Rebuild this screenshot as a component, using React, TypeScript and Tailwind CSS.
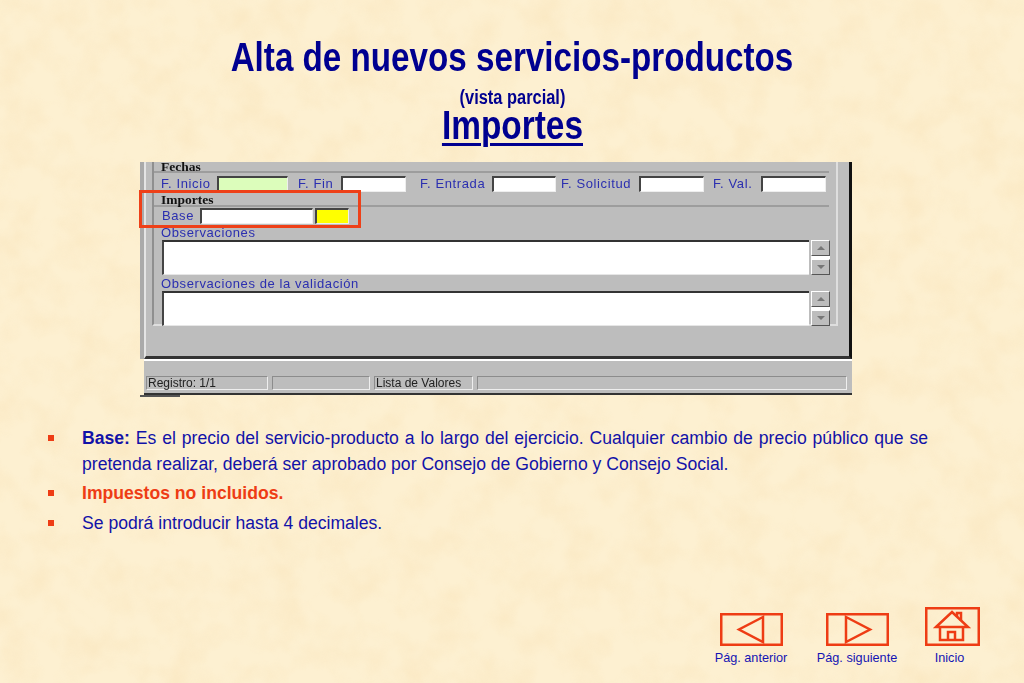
function Field({ w, green, yellow }: { w: string; green?: boolean; yellow?: boolean }) {
  const bg = green ? "bg-[#dcfdbb]" : yellow ? "bg-[#ffff00]" : "bg-white";
  return <div className={`${w} h-[16px] shrink-0 ${bg} border-t-2 border-l-2 border-t-[#444] border-l-[#444] border-r border-b border-r-[#eee] border-b-[#eee]`} />;
}

function Label({ children, w }: { children: string; w: string }) {
  return <span className={`${w} shrink-0 text-[13px] leading-[16px] tracking-[0.6px] text-[#2b2fb0] whitespace-nowrap font-['Liberation_Sans',sans-serif]`}>{children}</span>;
}

function Section({ children, h, mt }: { children: string; h: string; mt: string }) {
  return (
    <div className={`${mt} ${h} border-b-2 border-b-[#9d9d9d] pl-[7px] text-[13.5px] leading-[9px] font-bold text-[#111] font-['Liberation_Serif',serif] w-[675px]`}>
      {children}
    </div>
  );
}

function Scroll() {
  const btn = "h-[16px] w-[19px] bg-[#bdbdbd] border border-t-white border-l-white border-r-[#555] border-b-[#555] flex items-center justify-center";
  return (
    <div className="ml-[2px] w-[19px] h-[35px] flex flex-col justify-between bg-white">
      <div className={btn}><div className="w-0 h-0 border-x-[4px] border-x-transparent border-b-[4px] border-b-[#777]" /></div>
      <div className={btn}><div className="w-0 h-0 border-x-[4px] border-x-transparent border-t-[4px] border-t-[#777]" /></div>
    </div>
  );
}

function Area() {
  return (
    <div className="flex pl-[8px]">
      <div className="w-[647px] h-[35px] bg-white border-t-2 border-l-2 border-t-[#333] border-l-[#444] border-b border-b-[#e6e6e6]" />
      <Scroll />
    </div>
  );
}

function Status({ w, children }: { w: string; children?: string }) {
  return (
    <div className={`${w} h-[14px] border border-t-[#8c8c8c] border-l-[#8c8c8c] border-r-[#eee] border-b-[#eee] pl-[1px] text-[12px] leading-[13px] text-[#222] font-['Liberation_Sans',sans-serif] whitespace-nowrap`}>
      {children}
    </div>
  );
}

function NavItem({ w, label, labelClass, children }: { w: string; label: string; labelClass?: string; children: React.ReactNode }) {
  return (
    <div className={`${w} flex flex-col items-center`}>
      {children}
      <span className={`mt-[6px] text-[12.7px] leading-[13px] text-[#1414b4] whitespace-nowrap font-['Liberation_Sans',sans-serif] ${labelClass ?? ""}`}>{label}</span>
    </div>
  );
}

function Bullet({ children, mt }: { children: React.ReactNode; mt: string }) {
  return (
    <li className={`${mt} flex`}>
      <span className="mt-[10px] ml-[48px] mr-[28px] w-[6px] h-[6px] shrink-0 bg-[#ee3c14]" />
      <div className="w-[846px] text-justify">{children}</div>
    </li>
  );
}

export default function App() {
  return (
    <div className="relative w-[1024px] h-[683px] overflow-hidden bg-[#fdf0d1] font-['Liberation_Sans',sans-serif]">
      <svg className="absolute inset-0" width="1024" height="683" aria-hidden="true">
        <filter id="paper">
          <feTurbulence type="fractalNoise" baseFrequency="0.03" numOctaves="3" seed="7" />
          <feColorMatrix type="matrix" values="0 0 0 0 0.95  0 0 0 0 0.78  0 0 0 0 0.5  1.8 0 0 0 -0.68" />
        </filter>
        <rect width="1024" height="683" filter="url(#paper)" opacity="0.6" />
      </svg>

      <div className="relative flex flex-col h-full">
        <header className="flex flex-col items-center font-bold text-[#000090]">
          <h1 className="mt-[34px] text-[40px] leading-[46px] whitespace-nowrap scale-x-[0.83]">Alta de nuevos servicios-productos</h1>
          <p className="mt-[7px] text-[20px] leading-[20px] whitespace-nowrap scale-x-[0.82]">(vista parcial)</p>
          <h2 className="text-[40px] leading-[36px] underline decoration-[3px] underline-offset-[4px] scale-x-[0.835]">Importes</h2>
        </header>

        <div className="relative mt-[19px] ml-[140px] w-[713px] h-[236px] blur-[0.35px]">
          <div className="flex h-[197px]">
            <div className="w-[4px] bg-[#aaaaaa]" />
            <div className="w-[708px] bg-[#bdbdbd] border-l-2 border-l-[#e4e4e4] border-b-[3px] border-b-[#333] border-r-[3px] border-r-[#111]">
              <div className="ml-[6px] w-[686px] h-[164px] border-x-2 border-b-2 border-x-[#dedede] border-b-[#dedede] border-l-[#8f8f8f]">
                <Section mt="mt-0" h="h-[11px]">Fechas</Section>
                <div className="mt-[3px] flex items-center pl-[7px]">
                  <Label w="w-[56px]">F. Inicio</Label>
                  <Field w="w-[71px]" green />
                  <span className="w-[10px]" />
                  <Label w="w-[43px]">F. Fin</Label>
                  <Field w="w-[65px]" />
                  <span className="w-[14px]" />
                  <Label w="w-[72px]">F. Entrada</Label>
                  <Field w="w-[64px]" />
                  <span className="w-[5px]" />
                  <Label w="w-[78px]">F. Solicitud</Label>
                  <Field w="w-[65px]" />
                  <span className="w-[9px]" />
                  <Label w="w-[48px]">F. Val.</Label>
                  <Field w="w-[65px]" />
                </div>
                <Section mt="mt-[3px]" h="h-[12px]">Importes</Section>
                <div className="mt-[1px] flex items-center pl-[8px]">
                  <Label w="w-[38px]">Base</Label>
                  <Field w="w-[113px]" />
                  <span className="w-[2px]" />
                  <Field w="w-[34px]" yellow />
                </div>
                <div className="mt-[1px] pl-[7px] h-[15px] flex items-center"><Label w="w-[200px]">Observaciones</Label></div>
                <Area />
                <div className="mt-[1px] pl-[7px] h-[15px] flex items-center"><Label w="w-[300px]">Observaciones de la validación</Label></div>
                <Area />
              </div>
            </div>
          </div>
          <div className="ml-[4px] w-[708px] h-[36px] bg-[#bdbdbd] border-t-2 border-t-white border-b-2 border-b-[#333] flex items-end gap-[4px] pl-[2px] pb-[3px]">
            <Status w="w-[122px]">Registro: 1/1</Status>
            <Status w="w-[98px]" />
            <Status w="w-[99px]">Lista de Valores</Status>
            <Status w="w-[370px]" />
          </div>
          <div className="w-[40px] h-[2px] bg-[#555]" />
          <div className="absolute -left-px top-[28px] w-[222px] h-[38px] border-[3px] border-[#ee4018]" />
        </div>

        <ul className="mt-[27px] text-[17.6px] leading-[26px] text-[#1212a8]">
          <Bullet mt="mt-0"><b>Base:</b> Es el precio del servicio-producto a lo largo del ejercicio. Cualquier cambio de precio público que se pretenda realizar, deberá ser aprobado por Consejo de Gobierno y Consejo Social.</Bullet>
          <Bullet mt="mt-[3px]"><b className="text-[#ee3c14]">Impuestos no incluidos.</b></Bullet>
          <Bullet mt="mt-[4px]">Se podrá introducir hasta 4 decimales.</Bullet>
        </ul>

        <nav className="absolute left-[711px] bottom-[18px] flex items-end">
          <NavItem w="w-[80px]" label="Pág. anterior">
            <svg width="63" height="33" viewBox="0 0 63 33" fill="none" stroke="#ee3c14" strokeWidth="2.5"><rect x="1.25" y="1.25" width="60.5" height="30.5" /><path d="M43 4 L19 16.5 L43 29 Z" /></svg>
          </NavItem>
          <div className="w-[26px]" />
          <NavItem w="w-[80px]" label="Pág. siguiente">
            <svg width="63" height="33" viewBox="0 0 63 33" fill="none" stroke="#ee3c14" strokeWidth="2.5"><rect x="1.25" y="1.25" width="60.5" height="30.5" /><path d="M20 4 L44 16.5 L20 29 Z" /></svg>
          </NavItem>
          <div className="w-[25px]" />
          <NavItem w="w-[60px]" label="Inicio" labelClass="mr-[5px]">
            <svg width="55" height="39" viewBox="0 0 55 39" fill="none" stroke="#ee3c14" strokeWidth="2.5"><rect x="1.25" y="1.25" width="52.5" height="36.5" /><path d="M11 20 L27 5 L43 20 Z" /><path d="M15 20 V33 H38 V20" /><path d="M32 10 V6 H36 V14" /><path d="M23 33 V25 H30 V33" /></svg>
          </NavItem>
        </nav>
      </div>
    </div>
  );
}
